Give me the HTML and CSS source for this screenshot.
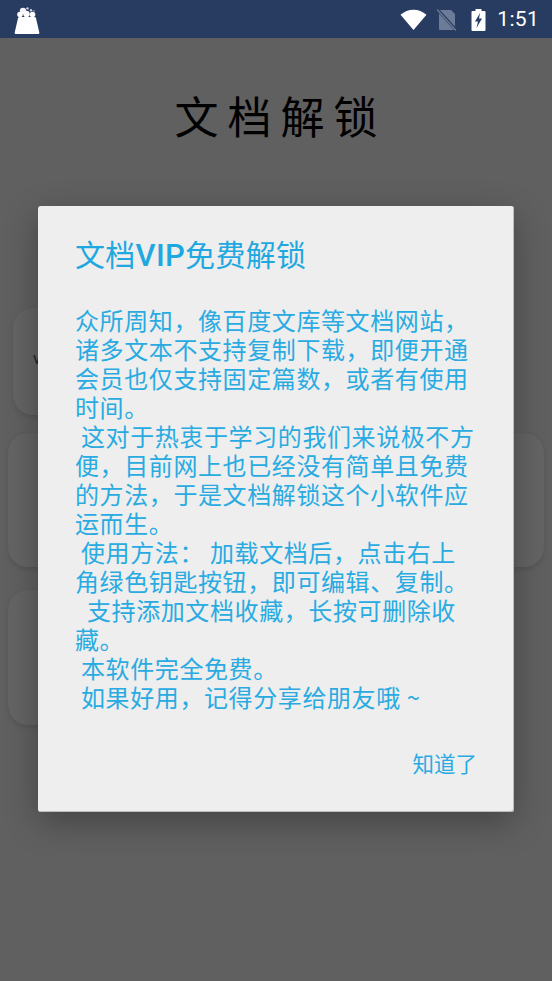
FILE: index.html
```html
<!DOCTYPE html>
<html lang="zh-CN">
<head>
<meta charset="utf-8">
<title>文档解锁</title>
<link rel="stylesheet" href="styles.css">
</head>
<body>
<div class="screen">
  <header class="status">
    <svg class="app-icon" viewBox="0 0 26 28" width="26" height="28"><path fill="#fff" d="M5.500 11h15c.8 0 1.300.4 1.500 1.200L25.300 26.500c.2.900-.3 1.500-1.200 1.500H1.900c-.9 0-1.400-.6-1.200-1.500L4 12.200C4.200 11.400 4.700 11 5.500 11z"/><circle cx="9" cy="5" r="3.200" fill="#f2f4f8"/><circle cx="6" cy="8.500" r="2.800" fill="#fff"/><circle cx="12.500" cy="8" r="3.200" fill="#fff"/><circle cx="18.500" cy="8.500" r="2.800" fill="#fff"/><circle cx="13.500" cy="2.400" r="1.200" fill="#cfd6e2"/><circle cx="17" cy="4.200" r="1.200" fill="#cfd6e2"/><circle cx="20" cy="5" r=".8" fill="#aab4c8"/></svg>
    <div class="status-right">
      <svg class="wifi" viewBox="0 0 26 20" width="27" height="21"><path fill="#fff" d="M13 20 0.500 5.500C4 2.300 8.300.600 13 .600s9 1.700 12.500 4.900z"/></svg>
      <svg class="sim" viewBox="0 0 20 22" width="20" height="22"><path fill="#6c7b97" d="M3 1h11l4 4v15a1 1 0 0 1-1 1H3a1 1 0 0 1-1-1V2a1 1 0 0 1 1-1z"/><path stroke="#283b61" stroke-width="3" d="M0 0 20 22"/><path stroke="#6c7b97" stroke-width="1.300" d="M0 .5 19 21.500"/></svg>
      <svg class="battery" viewBox="0 0 14 22" width="15" height="22"><path fill="#fff" d="M4 2V0h6v2h3a1 1 0 0 1 1 1v18a1 1 0 0 1-1 1H1a1 1 0 0 1-1-1V3a1 1 0 0 1 1-1z"/><path fill="#283b61" d="M8.500 4 3.500 12.500h3L5 19l5.500-9.500h-3z"/></svg>
      <span class="clock">1:51</span>
    </div>
  </header>
  <main class="page">
    <h1 class="app-title">文档解锁</h1>
    <div class="cards">
      <div class="card card-a"><span class="card-mark">v</span></div>
      <div class="card card-b"></div>
      <div class="card card-c"></div>
    </div>
  </main>
  <section class="dialog">
    <h2 class="dialog-title">文档<span class="latin">VIP</span>免费解锁</h2>
    <p class="dialog-body">众所周知，像百度文库等文档网站，
诸多文本不支持复制下载，即便开通
会员也仅支持固定篇数，或者有使用
时间。
 这对于热衷于学习的我们来说极不方
便，目前网上也已经没有简单且免费
的方法，于是文档解锁这个小软件应
运而生。
 使用方法： 加载文档后，点击右上
角绿色钥匙按钮，即可编辑、复制。
  支持添加文档收藏，长按可删除收
藏。
 本软件完全免费。
 如果好用，记得分享给朋友哦 ~</p>
    <div class="dialog-actions"><span class="dialog-btn">知道了</span></div>
  </section>
</div>
</body>
</html>
```

FILE: styles.css
```css
* { box-sizing: border-box; }
html, body { margin: 0; padding: 0; }
body { font-family: "Noto Sans CJK SC", "Roboto", sans-serif; background: #5f5f5f; }
.screen { position: relative; width: 552px; height: 981px; overflow: hidden; background: #606060; }
.status { height: 38px; background: #283b61; display: flex; align-items: center; justify-content: space-between; padding: 0 13px 0 14px; }
.app-icon { margin-top: 1px; }
.status-right { display: flex; align-items: center; }
.wifi { margin-right: 10px; margin-top: 1px; }
.sim { margin-right: 14px; margin-top: 1px; }
.battery { margin-right: 11px; margin-top: 1px; }
.clock { font-family: "Roboto", sans-serif; font-size: 21px; color: #fff; line-height: 38px; letter-spacing: .3px; }
.page { display: flex; flex-direction: column; }
.app-title { margin: 47px 0 0; height: 60px; text-align: center; font-size: 44px; line-height: 60px; font-weight: 400; color: #000; letter-spacing: 9px; padding-left: 9px; }
.cards { margin-top: 163px; display: flex; flex-direction: column; }
.card { background: #646464; border-radius: 20px; box-shadow: 0 2px 5px rgba(0,0,0,.12); }
.card-a { height: 107px; width: 480px; margin-left: 13px; display: flex; align-items: center; padding: 0 0 6px 20px; }
.card-b { height: 134px; margin: 18px 8px 0; }
.card-c { height: 135px; width: 490px; margin: 23px 0 0 8px; }
.card-mark { font-family: "Roboto", sans-serif; font-size: 16px; color: #222; }
.dialog { position: absolute; left: 38px; top: 206px; width: 476px; height: 606px; background: #eeeeee; border-radius: 3px; padding: 26px 37px 0; box-shadow: inset -1px -1px 0 #bdbdbd, 0 10px 34px rgba(0,0,0,.3); display: flex; flex-direction: column; }
.dialog-title { margin: 0; font-size: 30px; line-height: 42px; font-weight: 400; letter-spacing: .3px; color: #1fa8e0; }
.latin { font-family: "Roboto", sans-serif; font-weight: 500; font-size: 31px; }
.dialog-body { margin: 28px 0 0; font-size: 24px; line-height: 29px; letter-spacing: .6px; color: #29abe2; white-space: pre; }
.dialog-actions { display: flex; justify-content: flex-end; margin-top: 37px; margin-right: 0; }
.dialog-btn { font-size: 21.500px; line-height: 30px; color: #29abe2; }
```
